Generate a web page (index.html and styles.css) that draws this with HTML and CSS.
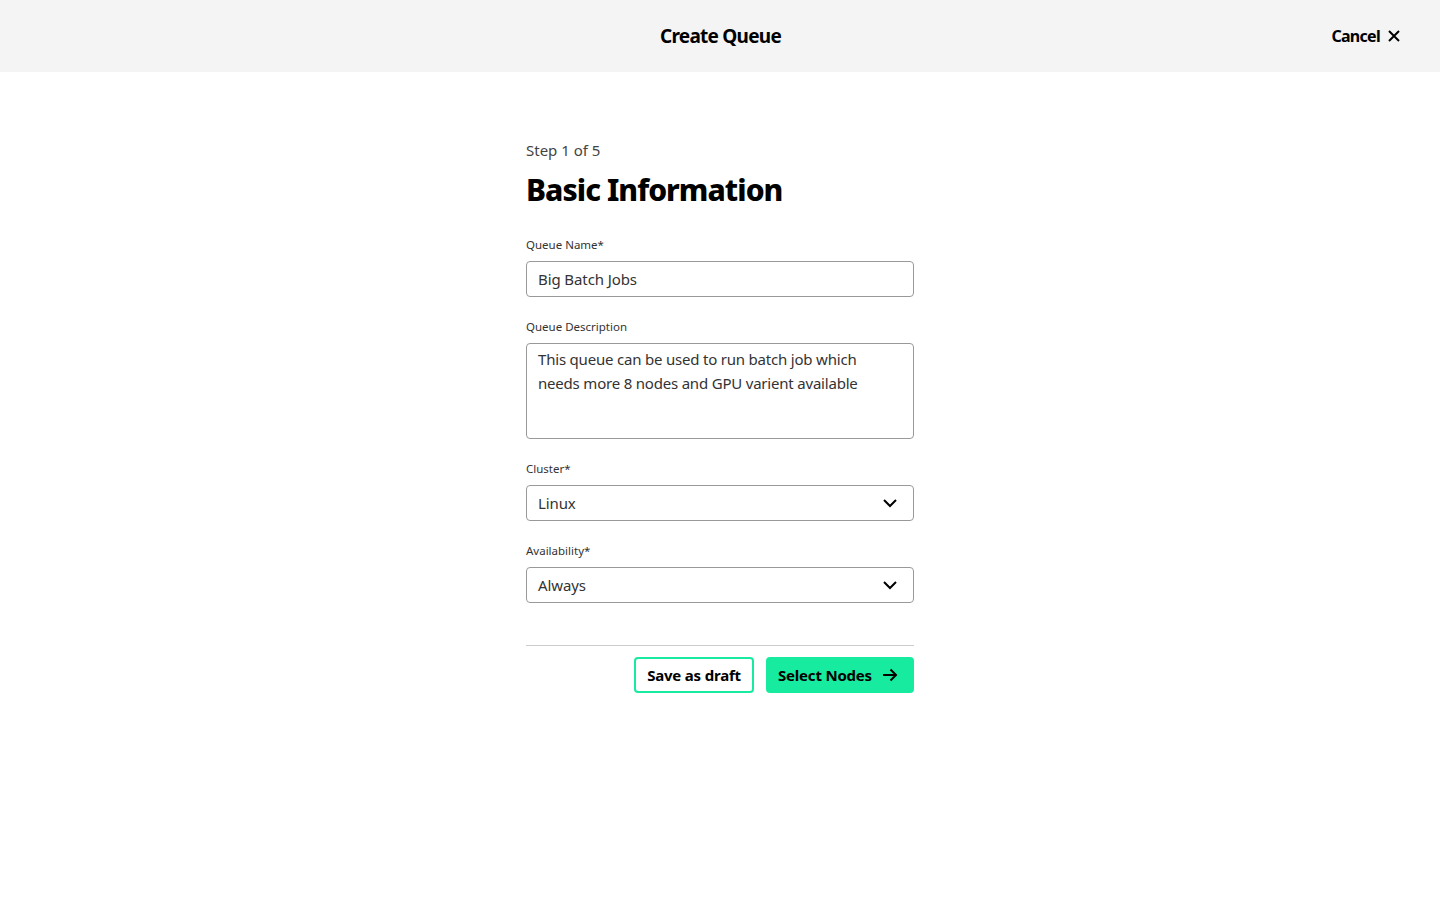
FILE: index.html
```html
<!DOCTYPE html>
<html lang="en">
<head>
<meta charset="utf-8">
<title>Create Queue</title>
<link rel="stylesheet" href="styles.css">
</head>
<body>
  <header class="topbar">
    <div class="topbar-side"></div>
    <h1 class="topbar-title">Create Queue</h1>
    <div class="topbar-side topbar-actions">
      <button class="cancel-btn" type="button">
        <span>Cancel</span>
        <svg width="14" height="14" viewBox="0 0 14 14" aria-hidden="true">
          <path d="M2 2 L12 12 M12 2 L2 12" stroke="#000" stroke-width="2" fill="none"/>
        </svg>
      </button>
    </div>
  </header>

  <main class="wizard">
    <form class="wizard-form">
      <p class="step">Step 1 of 5</p>
      <h2 class="step-title">Basic Information</h2>

      <div class="field">
        <label class="field-label" for="qname">Queue Name*</label>
        <input class="control" id="qname" type="text" value="Big Batch Jobs">
      </div>

      <div class="field">
        <label class="field-label" for="qdesc">Queue Description</label>
        <textarea class="control control-area" id="qdesc">This queue can be used to run batch job which needs more 8 nodes and GPU varient available</textarea>
      </div>

      <div class="field">
        <span class="field-label">Cluster*</span>
        <div class="control select">
          <span>Linux</span>
          <svg class="chevron" width="16" height="10" viewBox="0 0 16 10" aria-hidden="true">
            <path d="M2 2 L8 8 L14 2" stroke="#000" stroke-width="2" fill="none"/>
          </svg>
        </div>
      </div>

      <div class="field">
        <span class="field-label">Availability*</span>
        <div class="control select">
          <span>Always</span>
          <svg class="chevron" width="16" height="10" viewBox="0 0 16 10" aria-hidden="true">
            <path d="M2 2 L8 8 L14 2" stroke="#000" stroke-width="2" fill="none"/>
          </svg>
        </div>
      </div>

      <div class="form-footer">
        <button class="btn btn-secondary" type="button">Save as draft</button>
        <button class="btn btn-primary" type="button">
          <span>Select Nodes</span>
          <svg width="16" height="14" viewBox="0 0 16 14" aria-hidden="true">
            <path d="M1 7 H14 M8.5 1.5 L14 7 L8.5 12.5" stroke="#000" stroke-width="2" fill="none"/>
          </svg>
        </button>
      </div>
    </form>
  </main>
</body>
</html>
```
FILE: styles.css
```css
* {
  box-sizing: border-box;
}

html, body {
  margin: 0;
  padding: 0;
  background: #ffffff;
  color: #000000;
  font-family: "Noto Sans", "Liberation Sans", sans-serif;
}

/* Top bar */
.topbar {
  height: 72px;
  background: #f4f4f4;
  display: flex;
  align-items: center;
  justify-content: space-between;
  padding: 0 39px 0 40px;
}

.topbar-side {
  flex: 1;
}

.topbar-actions {
  display: flex;
  justify-content: flex-end;
}

.topbar-title {
  margin: 0;
  font-size: 19px;
  font-weight: 700;
  letter-spacing: -0.75px;
  line-height: 24px;
}

.cancel-btn {
  display: flex;
  align-items: center;
  gap: 7px;
  border: none;
  background: none;
  padding: 0;
  font-family: inherit;
  font-size: 16px;
  font-weight: 700;
  letter-spacing: -0.7px;
  color: #000;
  cursor: pointer;
}

/* Wizard body */
.wizard {
  display: flex;
  justify-content: center;
  padding-top: 66px;
}

.wizard-form {
  width: 388px;
  display: flex;
  flex-direction: column;
}

.step {
  margin: 0;
  font-size: 15px;
  line-height: 24px;
  color: #444444;
}

.step-title {
  margin: 8px 0 26px;
  font-size: 30px;
  line-height: 40px;
  font-weight: 800;
  letter-spacing: -0.95px;
}

.field {
  display: flex;
  flex-direction: column;
  gap: 9px;
  margin-bottom: 21px;
}

.field-label {
  font-size: 11.5px;
  line-height: 16px;
  color: #333333;
  padding-top: 1px;
  margin-bottom: -1px;
}

.control {
  height: 36px;
  width: 100%;
  border: 1px solid #999999;
  border-radius: 4px;
  padding: 0 11px;
  font-family: inherit;
  font-size: 15px;
  letter-spacing: -0.1px;
  color: #333333;
  background: #ffffff;
  outline: none;
}

.control-area {
  height: 96px;
  padding: 3px 40px 3px 11px;
  line-height: 24px;
  letter-spacing: -0.2px;
  resize: none;
}

.select {
  display: flex;
  align-items: center;
  justify-content: space-between;
  padding-right: 15px;
}

.chevron {
  display: block;
}

/* Footer actions */
.form-footer {
  margin-top: 21px;
  border-top: 1px solid #cccccc;
  padding-top: 11px;
  display: flex;
  justify-content: flex-end;
  gap: 12px;
}

.btn {
  height: 36px;
  border-radius: 4px;
  font-family: inherit;
  font-size: 15px;
  font-weight: 700;
  letter-spacing: -0.2px;
  color: #000;
  cursor: pointer;
  display: flex;
  align-items: center;
}

.btn-secondary {
  width: 120px;
  justify-content: center;
  background: #ffffff;
  border: 2px solid #17eba0;
}

.btn-primary {
  width: 148px;
  background: #17eba0;
  border: none;
  padding: 0 16px 0 12px;
  justify-content: space-between;
}
```
